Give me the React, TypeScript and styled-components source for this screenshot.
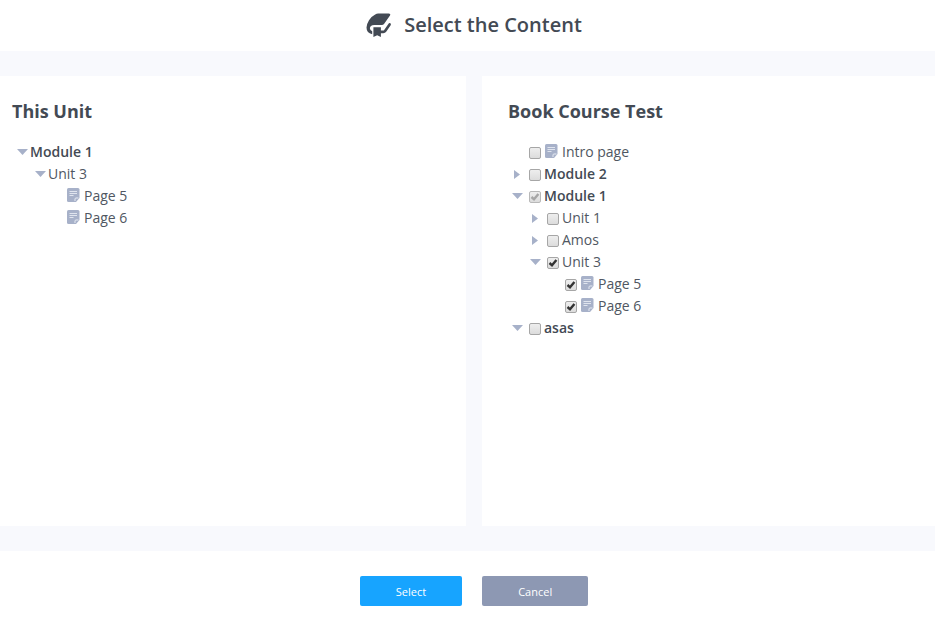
import React, { useId, useState } from "react";
import styled, { createGlobalStyle } from "styled-components";

const GlobalStyle = createGlobalStyle`
  *, *::before, *::after { box-sizing: border-box; }
  html, body, #root { height: 100%; }
  body {
    margin: 0;
    background: #ffffff;
    color: #434a54;
    font-family: "Open Sans", sans-serif;
    font-size: 14px;
  }
`;

const Dialog = styled.div`
  display: flex;
  flex-direction: column;
  min-height: 100%;
`;

const Header = styled.header`
  display: flex;
  align-items: center;
  justify-content: center;
  gap: 12px;
  padding: 10px 0 11px 13px;
`;

const Title = styled.h1`
  margin: 0;
  font-size: 20px;
  line-height: 30px;
  font-weight: 600;
`;

const Body = styled.main`
  flex: 1;
  display: grid;
  grid-template-columns: 466fr 453fr;
  gap: 16px;
  padding: 25px 0;
  background: #f8f9fd;
`;

const Panel = styled.section<{ $inset: number }>`
  padding: 22px 12px 22px ${(p) => p.$inset}px;
  background: #ffffff;
`;

const PanelTitle = styled.h2`
  margin: 0 0 16px;
  font-size: 18px;
  line-height: 27px;
  font-weight: 700;
`;

const Branch = styled.ul<{ $nested?: boolean }>`
  list-style: none;
  margin: 0;
  padding: 0 0 0 ${(p) => (p.$nested ? 18 : 0)}px;
`;

const Row = styled.div`
  display: flex;
  align-items: center;
  height: 22px;
`;

const Toggle = styled.button<{ $shifted?: boolean }>`
  display: flex;
  align-items: center;
  justify-content: center;
  width: 18px;
  height: 22px;
  padding: 0 0 0 ${(p) => (p.$shifted ? 3 : 0)}px;
  border: 0;
  background: none;
  cursor: pointer;
`;

const Spacer = styled.span`
  width: 18px;
`;

const Label = styled.label<{ $bold?: boolean }>`
  display: flex;
  align-items: center;
  line-height: 22px;
  font-weight: ${(p) => (p.$bold ? 600 : 400)};
  color: ${(p) => (p.$bold ? "#434a54" : "#505762")};
`;

const CheckFrame = styled.span`
  position: relative;
  width: 12px;
  height: 12px;
  margin: 2px 3px 0 3px;
`;

const CheckInput = styled.input`
  appearance: none;
  display: block;
  width: 12px;
  height: 12px;
  margin: 0;
  border: 1px solid #a6a6a6;
  border-radius: 2px;
  background: linear-gradient(#eeeeee, #dcdcdc);
  &:disabled { border-color: #b8b8b8; }
`;

const Tick = styled.svg<{ $muted?: boolean }>`
  position: absolute;
  inset: 0;
  pointer-events: none;
  color: ${(p) => (p.$muted ? "#a6a6a6" : "#333333")};
`;

const PageGlyph = styled.svg`
  flex: none;
  margin: 0 4px 2px 1px;
`;

const Footer = styled.footer`
  display: flex;
  justify-content: center;
  gap: 20px;
  padding: 25px 0 12px 13px;
`;

const Button = styled.button<{ $primary?: boolean }>`
  height: 30px;
  padding: 1px 36px 0;
  border: 0;
  border-radius: 2px;
  background: ${(p) => (p.$primary ? "#17a4ff" : "#8d98b3")};
  color: #ffffff;
  font: 400 11px/28px "Open Sans", sans-serif;
  cursor: pointer;
`;

function BookLogo() {
  return (
    <svg width="26" height="25" viewBox="0 0 26 25" aria-hidden="true">
      <path
        fill="#434a54"
        d="M9.2 1.4Q10.6.6 12.2.6H22.8Q24.9.6 24 2.5L18 11Q17.2 12.1 15.8 12.1H8.3Q3.9 12.4 3.9 15.4Q4 17.2 6.2 18.2V21.3Q.5 20 .5 14.6Q.5 11.2 3 7.2Q5.6 3.1 9.2 1.4Z"
      />
      <path fill="#434a54" d="M7.4 14.2H14.9V24L11.2 22.2L7.4 24Z" />
      <path
        fill="none"
        stroke="#434a54"
        strokeWidth="2.6"
        strokeLinecap="round"
        strokeLinejoin="round"
        d="M14.3 18.9H17.3Q18.5 18.9 19.1 18L23.6 11.4"
      />
    </svg>
  );
}

function Arrow({ open }: { open: boolean }) {
  return open ? (
    <svg width="11" height="6" viewBox="0 0 11 6" aria-hidden="true">
      <path fill="#a7b1c9" d="M0 0H11L5.5 6Z" />
    </svg>
  ) : (
    <svg width="6" height="9" viewBox="0 0 6 9" aria-hidden="true">
      <path fill="#a7b1c9" d="M0 0L6 4.5L0 9Z" />
    </svg>
  );
}

function PageIcon() {
  return (
    <PageGlyph width="13" height="14" viewBox="0 0 13 14" aria-hidden="true">
      <path fill="#a7b1c9" d="M1.5 0H11Q12.5 0 12.5 1.5V10L9 14H1.5Q0 14 0 12.5V1.5Q0 0 1.5 0Z" />
      <path fill="none" stroke="#e6eaf2" strokeWidth="1" d="M8 13V11Q8 10 9 10H11.5" />
      <path stroke="#dfe4ee" d="M2.5 3.5H10M2.5 5.5H10M2.5 7.5H6.5" />
    </PageGlyph>
  );
}

interface TreeItem {
  label: string;
  kind: "module" | "unit" | "page";
  open?: boolean;
  checked?: boolean;
  partial?: boolean;
  children?: TreeItem[];
}

function TreeNode({ item, selectable }: { item: TreeItem; selectable?: boolean }) {
  const id = useId();
  const [open, setOpen] = useState(!!item.open);
  const [checked, setChecked] = useState(!!item.checked);
  return (
    <li>
      <Row>
        {item.kind === "page" ? (
          <Spacer />
        ) : (
          <Toggle
            type="button"
            $shifted={!selectable}
            aria-label={item.label}
            aria-expanded={open}
            onClick={() => setOpen(!open)}
          >
            <Arrow open={open} />
          </Toggle>
        )}
        {selectable && (
          <CheckFrame>
            <CheckInput
              id={id}
              type="checkbox"
              checked={checked}
              disabled={item.partial}
              onChange={(e) => setChecked(e.target.checked)}
            />
            {checked && (
              <Tick $muted={item.partial} width="12" height="12" viewBox="0 0 12 12" aria-hidden="true">
                <path fill="none" stroke="currentColor" strokeWidth="2.4" d="M2.5 6L5 8.3L9.4 3" />
              </Tick>
            )}
          </CheckFrame>
        )}
        <Label as={selectable ? "label" : "span"} htmlFor={selectable ? id : undefined} $bold={item.kind === "module"}>
          {item.kind === "page" && <PageIcon />}
          {item.label}
        </Label>
      </Row>
      {open && item.children && (
        <Branch $nested>
          {item.children.map((child) => (
            <TreeNode key={child.label} item={child} selectable={selectable} />
          ))}
        </Branch>
      )}
    </li>
  );
}

const unitItems: TreeItem[] = [
  {
    label: "Module 1",
    kind: "module",
    open: true,
    children: [
      {
        label: "Unit 3",
        kind: "unit",
        open: true,
        children: [
          { label: "Page 5", kind: "page" },
          { label: "Page 6", kind: "page" },
        ],
      },
    ],
  },
];

const courseItems: TreeItem[] = [
  { label: "Intro page", kind: "page" },
  { label: "Module 2", kind: "module" },
  {
    label: "Module 1",
    kind: "module",
    open: true,
    checked: true,
    partial: true,
    children: [
      { label: "Unit 1", kind: "unit" },
      { label: "Amos", kind: "unit" },
      {
        label: "Unit 3",
        kind: "unit",
        open: true,
        checked: true,
        children: [
          { label: "Page 5", kind: "page", checked: true },
          { label: "Page 6", kind: "page", checked: true },
        ],
      },
    ],
  },
  { label: "asas", kind: "module", open: true },
];

export default function App() {
  return (
    <Dialog>
      <GlobalStyle />
      <Header>
        <BookLogo />
        <Title>Select the Content</Title>
      </Header>
      <Body>
        <Panel $inset={12}>
          <PanelTitle>This Unit</PanelTitle>
          <Branch>
            {unitItems.map((item) => (
              <TreeNode key={item.label} item={item} />
            ))}
          </Branch>
        </Panel>
        <Panel $inset={26}>
          <PanelTitle>Book Course Test</PanelTitle>
          <Branch>
            {courseItems.map((item) => (
              <TreeNode key={item.label} item={item} selectable />
            ))}
          </Branch>
        </Panel>
      </Body>
      <Footer>
        <Button type="button" $primary>
          Select
        </Button>
        <Button type="button">Cancel</Button>
      </Footer>
    </Dialog>
  );
}
